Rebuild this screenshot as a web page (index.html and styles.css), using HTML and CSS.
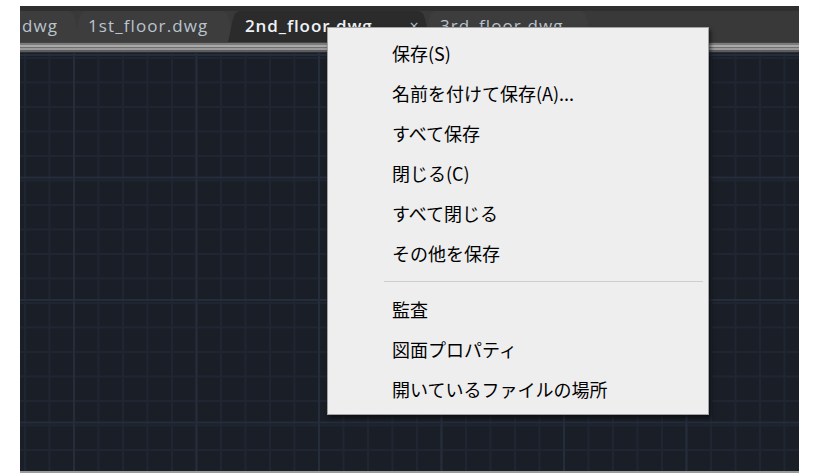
FILE: index.html
```html
<!DOCTYPE html>
<html lang="ja">
<head>
<meta charset="utf-8">
<title>CAD</title>
<link rel="stylesheet" href="styles.css">
</head>
<body>
<div class="app">
  <div class="tabbar">
    <div class="tab partial"><span class="label">dwg</span></div>
    <div class="tab"><span class="label">1st_floor.dwg</span></div>
    <div class="tab active"><span class="label">2nd_floor.dwg</span><span class="close">×</span></div>
    <div class="tab"><span class="label">3rd_floor.dwg</span></div>
  </div>
  <div class="rule"></div>
  <div class="canvas"></div>
  <div class="menu">
    <div class="item">保存(S)</div>
    <div class="item">名前を付けて保存(A)...</div>
    <div class="item">すべて保存</div>
    <div class="item">閉じる(C)</div>
    <div class="item">すべて閉じる</div>
    <div class="item">その他を保存</div>
    <div class="sep"></div>
    <div class="item">監査</div>
    <div class="item">図面プロパティ</div>
    <div class="item">開いているファイルの場所</div>
  </div>
</div>
</body>
</html>
```

FILE: styles.css
```css
html, body {
  margin: 0;
  padding: 0;
  background: #ffffff;
}
body {
  width: 820px;
  height: 476px;
  overflow: hidden;
}
.app {
  position: relative;
  margin: 6px 0 0 20px;
  width: 779px;
  height: 467px;
  display: flex;
  flex-direction: column;
  background: #1a1f27;
  border-bottom: 2px solid #9a9a9a;
  box-sizing: border-box;
  font-family: "Open Sans", "DejaVu Sans", sans-serif;
}
.tabbar {
  height: 36px;
  background: linear-gradient(#2f2f2f 0, #2f2f2f 5px, #393939 5px);
  display: flex;
  align-items: flex-end;
  overflow: hidden;
}
.tab {
  height: 31px;
  display: flex;
  align-items: center;
  box-sizing: border-box;
  padding: 0 16px 2px 16px;
  background: #3d3d3d;
  color: #b9c4cf;
  font-size: 17px;
  letter-spacing: 1.1px;
  white-space: nowrap;
  clip-path: polygon(0 100%, 5px 25%, 7px 8%, 11px 0, calc(100% - 11px) 0, calc(100% - 7px) 8%, calc(100% - 5px) 25%, 100% 100%);
  margin-right: -6px;
  flex-shrink: 0;
}
.tab.partial {
  width: 60px;
  padding-left: 2px;
  clip-path: polygon(0 100%, 0 0, calc(100% - 11px) 0, calc(100% - 7px) 8%, calc(100% - 5px) 25%, 100% 100%);
}
.tab:nth-child(2) {
  width: 160px;
  padding-left: 14px;
}
.tab.active {
  width: 202px;
  background: #2b2b2b;
  color: #eef2f6;
  font-weight: 600;
  padding-left: 17px;
  letter-spacing: 0.9px;
  z-index: 1;
}
.tab .close {
  margin-left: 37px;
  font-weight: 400;
  color: #b9c4cf;
  font-size: 16px;
}
.tab:nth-child(4) {
  width: 168px;
  padding-left: 16px;
}
.rule {
  height: 11px;
  background: linear-gradient(#444 0, #444 1px, #7c7c7c 1px, #7c7c7c 3px, #a9a9a9 3px, #a9a9a9 5px, #707070 5px, #707070 6px, #9b9b9b 6px, #9b9b9b 8px, #5c5c5c 8px, #5c5c5c 10px, #2a2f37 10px);
}
.canvas {
  flex: 1;
  background-color: #1a1f27;
  background-image:
    linear-gradient(90deg, #252c3a 0, #252c3a 2px, transparent 2px),
    linear-gradient(#252c3a 0, #252c3a 2px, transparent 2px),
    linear-gradient(90deg, #1f2531 0, #1f2531 2px, transparent 2px),
    linear-gradient(#1f2531 0, #1f2531 2px, transparent 2px);
  background-size: 122.5px 122.5px, 122.5px 122.5px, 24.5px 24.5px, 24.5px 24.5px;
  background-position: 53px 0, 0 1px, 4px 0, 0 4px;
}
.menu {
  position: absolute;
  left: 307px;
  top: 21px;
  width: 382px;
  box-sizing: border-box;
  padding: 5px 0 5px 0;
  background: #eeeeee;
  border: 1px solid #a3a3a3;
  box-shadow: 2px 3px 4px rgba(0, 0, 0, 0.55);
  font-family: "Noto Sans CJK JP", "Noto Sans", sans-serif;
  color: #000000;
  z-index: 5;
}
.item {
  height: 40px;
  line-height: 40px;
  padding-left: 64px;
  font-size: 18px;
  font-weight: 400;
  white-space: nowrap;
}
.sep {
  height: 16px;
  margin-left: 56px;
  margin-right: 5px;
  background: linear-gradient(transparent 0, transparent 8px, #cdcdcd 8px, #cdcdcd 9px, transparent 9px);
}
```
